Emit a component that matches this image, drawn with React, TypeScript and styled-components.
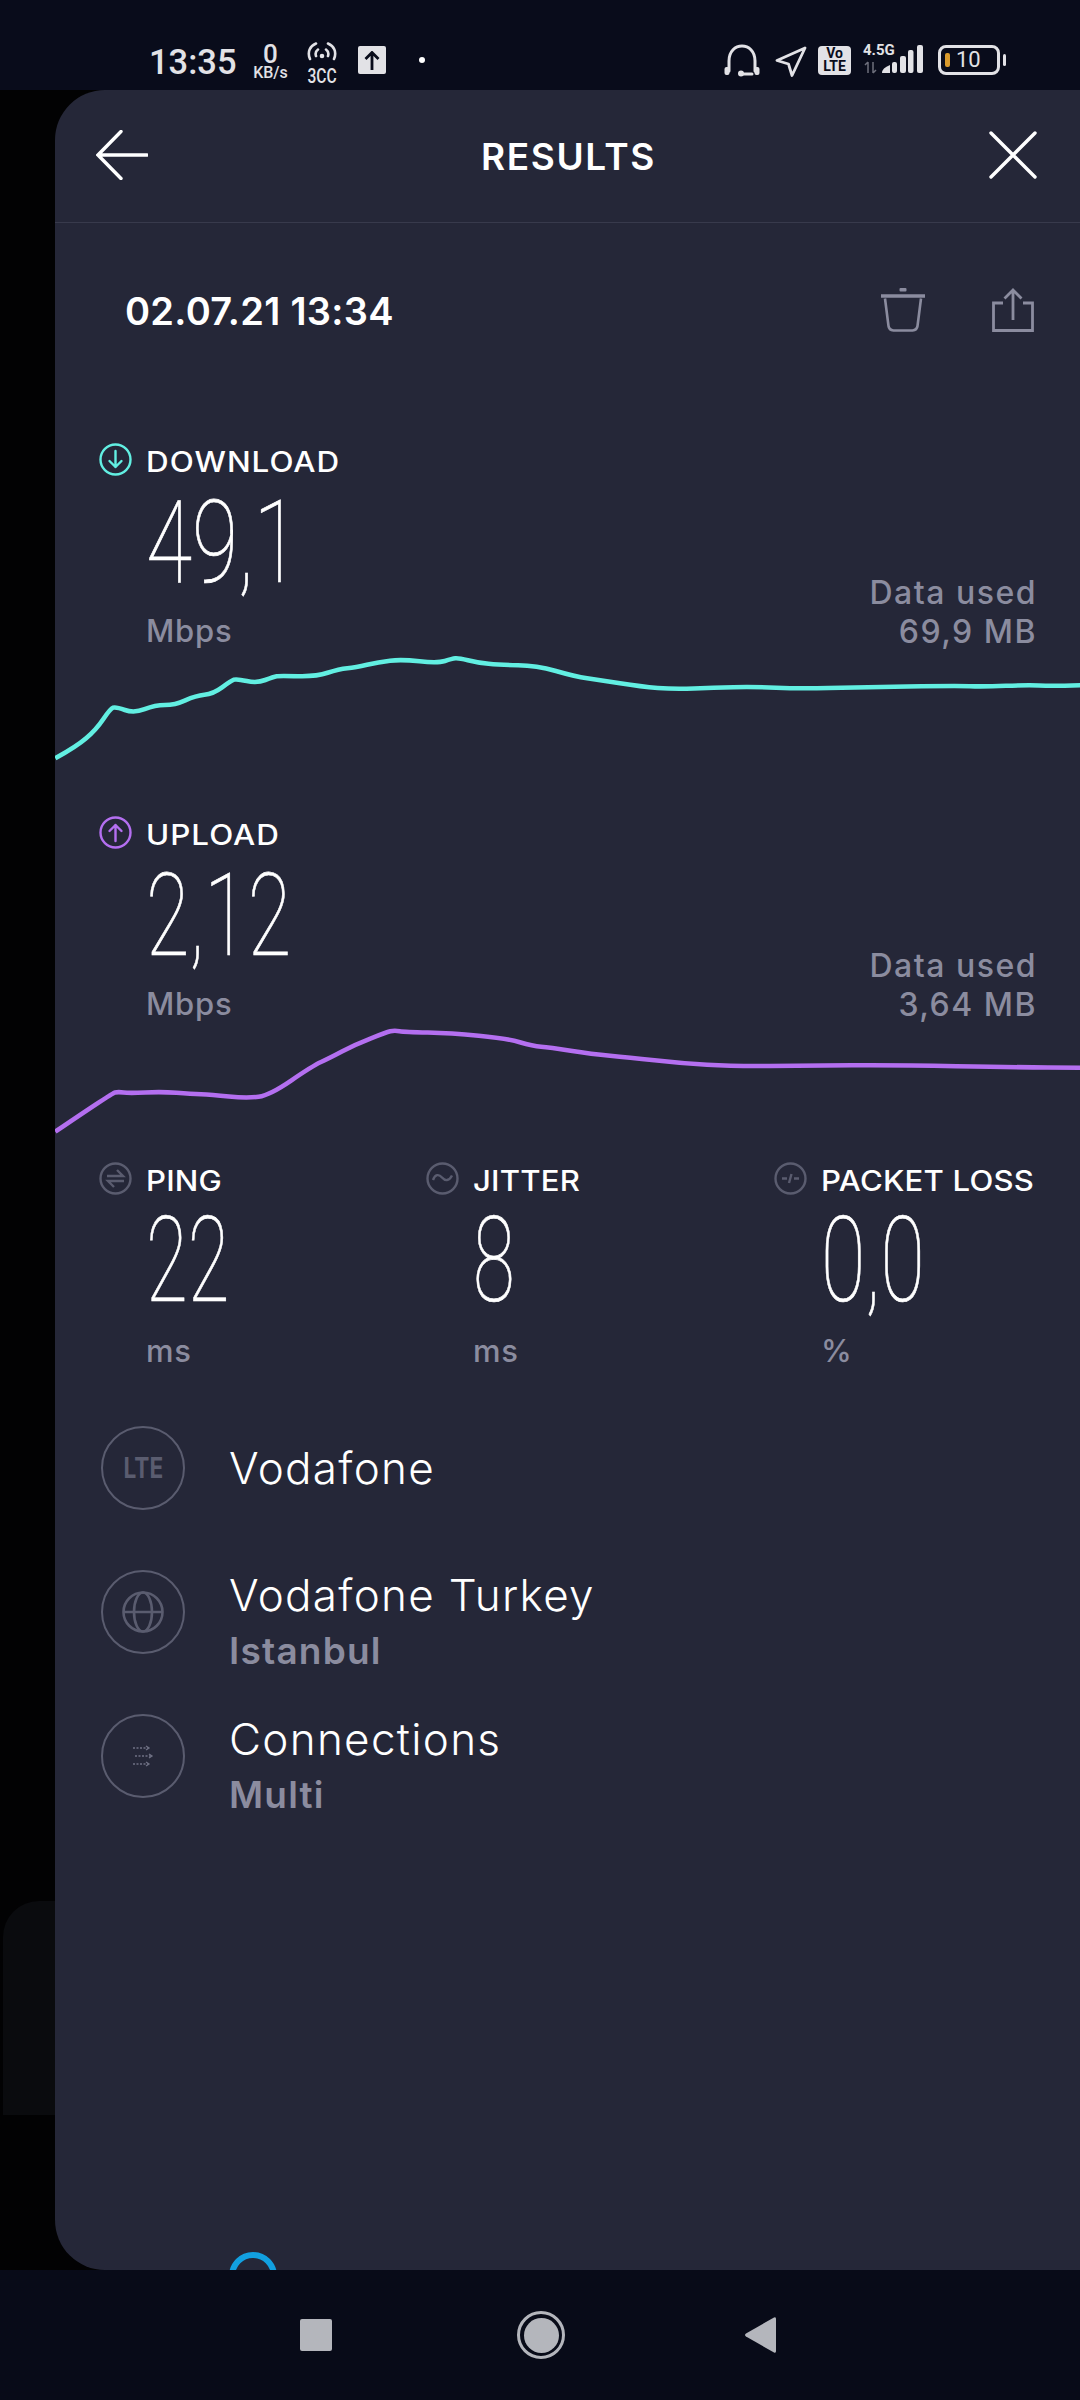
import React from 'react'
import styled, { createGlobalStyle } from 'styled-components'

const colors = {
  bar: '#090c1b',
  nav: '#080b18',
  backdrop: '#020203',
  sheet: '#252738',
  line: '#383a4c',
  white: '#ffffff',
  muted: '#8b8c9f',
  dim: '#5a5c6f',
  teal: '#62efe2',
  purple: '#b46ff0',
  status: '#e2e2e6',
  navIcon: '#b4b6bc'
}

const GlobalStyle = createGlobalStyle`
  html, body {
    margin: 0;
    padding: 0;
    background: ${colors.backdrop};
  }
  * {
    box-sizing: border-box;
  }
`

const Screen = styled.div`
  width: 1080px;
  height: 2400px;
  display: flex;
  flex-direction: column;
  overflow: hidden;
  font-family: Inter, 'Liberation Sans', sans-serif;
  color: ${colors.white};
`

/* status bar */
const StatusBar = styled.div`
  height: 90px;
  flex-shrink: 0;
  background: ${colors.bar};
  color: ${colors.status};
  display: flex;
  justify-content: space-between;
  align-items: flex-start;
  padding: 42px 80px 0 149px;
`
const StatusGroup = styled.div`
  display: flex;
  align-items: flex-start;
`
const Clock = styled.div`
  font-family: Roboto, sans-serif;
  font-weight: 500;
  font-size: 34.5px;
  line-height: 36px;
  width: 104px;
  margin-top: 2px;
`
const Speed = styled.div`
  width: 35px;
  text-align: center;
  font-family: Roboto, sans-serif;
  font-weight: 500;
`
const SpeedValue = styled.div`
  font-size: 26px;
  line-height: 24px;
`
const SpeedUnit = styled.div`
  font-size: 16px;
  line-height: 13px;
  white-space: nowrap;
  display: flex;
  justify-content: center;
`
const Carrier = styled.div`
  width: 30px;
  margin-left: 19px;
  font-family: Roboto, sans-serif;
  font-weight: 500;
`
const CarrierText = styled.div`
  font-size: 20px;
  line-height: 14px;
  margin-top: 4px;
  display: flex;
  justify-content: center;
  transform: scaleX(0.78);
  white-space: nowrap;
`
const UploadBadge = styled.div`
  width: 28px;
  height: 28px;
  margin: 4px 0 0 21px;
  border-radius: 2px;
  background: ${colors.status};
  color: ${colors.bar};
  display: flex;
  align-items: center;
  justify-content: center;
`
const Dot = styled.div`
  width: 6px;
  height: 6px;
  margin: 15px 0 0 33px;
  border-radius: 50%;
  background: ${colors.white};
`
const VoLte = styled.div`
  width: 33px;
  height: 29px;
  margin: 4px 0 0 11px;
  border-radius: 4px;
  background: ${colors.status};
  color: ${colors.bar};
  font-family: Roboto, sans-serif;
  font-weight: 700;
  font-size: 14px;
  line-height: 13px;
  text-align: center;
  padding-top: 1px;
`
const Signal = styled.div`
  width: 60px;
  height: 30px;
  margin: 2px 0 0 12px;
  position: relative;
`
const SignalLabel = styled.div`
  font-family: Roboto, sans-serif;
  font-weight: 700;
  font-size: 15px;
  line-height: 13px;
  white-space: nowrap;
`
const SignalBars = styled.svg`
  position: absolute;
  left: 0;
  top: 0;
`
const Battery = styled.div`
  width: 62px;
  height: 30px;
  margin: 3px 0 0 15px;
  border: 3px solid ${colors.status};
  border-radius: 8px;
  display: flex;
  align-items: center;
  padding-left: 4px;
  position: relative;
  &::after {
    content: '';
    position: absolute;
    right: -9px;
    top: 6px;
    width: 3px;
    height: 12px;
    border-radius: 2px;
    background: ${colors.status};
  }
`
const BatteryLevel = styled.div`
  width: 5px;
  height: 14px;
  border-radius: 2px;
  background: #d99a2b;
`
const BatteryText = styled.div`
  font-family: Roboto, sans-serif;
  font-size: 22px;
  line-height: 24px;
  margin-left: 6px;
`

/* sheet */
const Middle = styled.div`
  flex: 1;
  display: flex;
  position: relative;
  background: ${colors.backdrop};
`
const BackCard = styled.div`
  position: absolute;
  left: 3px;
  top: 1811px;
  width: 60px;
  height: 214px;
  border-radius: 36px 0 0 0;
  background: #0a0b0e;
`
const Sheet = styled.div`
  flex: 1;
  margin-left: 55px;
  background: ${colors.sheet};
  border-radius: 50px 0 0 50px;
  position: relative;
  overflow: hidden;
  z-index: 1;
`
const Header = styled.div`
  height: 133px;
  border-bottom: 1px solid ${colors.line};
  display: flex;
  align-items: center;
  justify-content: space-between;
  padding: 0 43px 2px 41px;
`
const Title = styled.div`
  font-weight: 600;
  font-size: 37px;
  line-height: 44px;
  letter-spacing: 1.6px;
  margin-top: 4px;
`
const DateRow = styled.div`
  height: 176px;
  display: flex;
  align-items: center;
  justify-content: space-between;
  padding: 0 46px 0 70px;
`
const DateText = styled.div`
  font-weight: 600;
  font-size: 38px;
  line-height: 44px;
  letter-spacing: 0.3px;
`
const DateActions = styled.div`
  display: flex;
  gap: 67px;
  margin-bottom: 2px;
  color: ${colors.muted};
`

const MetricList = styled.div`
  margin-top: 44px;
  display: flex;
  flex-direction: column;
  gap: 46px;
`
const Metric = styled.section``
const LabelRow = styled.div`
  display: flex;
  align-items: center;
  gap: 14px;
  height: 32px;
`
const MetricLabelRow = styled(LabelRow)`
  padding-left: 44px;
`
const Label = styled.div`
  font-weight: 500;
  font-size: 28px;
  line-height: 32px;
  letter-spacing: 0.9px;
  white-space: nowrap;
  margin-top: 5px;
  transform: scaleX(1.12);
  transform-origin: left center;
`
const StatLabel = styled(Label)`
  letter-spacing: 0.2px;
  transform: scaleX(1.11);
`
const MetricBody = styled.div`
  height: 175px;
  display: flex;
  justify-content: space-between;
  align-items: flex-start;
  padding: 0 43px 0 91px;
`
const Value = styled.div<{ $scale: number }>`
  font-family: Roboto, sans-serif;
  font-weight: 100;
  font-size: 115px;
  line-height: 118px;
  height: 118px;
  margin-top: 9px;
  white-space: nowrap;
  -webkit-text-stroke: 0.7px ${colors.white};
  transform: scaleX(${({ $scale }) => $scale});
  transform-origin: left center;
`
const Unit = styled.div`
  font-weight: 500;
  font-size: 31px;
  line-height: 34px;
  letter-spacing: 0.8px;
  color: ${colors.muted};
  margin-top: 12px;
`
const DataUsed = styled.div`
  margin-top: 98px;
  font-weight: 500;
  font-size: 32px;
  line-height: 39px;
  letter-spacing: 1.5px;
  color: ${colors.muted};
  text-align: right;
`
const ChartSvg = styled.svg`
  display: block;
  width: 1025px;
  height: 120px;
`
const ChartLine = styled.path<{ $color: string }>`
  fill: none;
  stroke: ${({ $color }) => $color};
  stroke-width: 4.6;
  stroke-linecap: butt;
  stroke-linejoin: round;
`

const Stats = styled.div`
  margin-top: 19px;
  padding-left: 44px;
  display: grid;
  grid-template-columns: 327px 348px auto;
`
const Stat = styled.div``
const StatBody = styled.div`
  padding-left: 47px;
  margin-top: 6px;
`
const StatValue = styled(Value)`
  font-size: 119px;
  height: 122px;
  line-height: 122px;
  margin-top: 0;
`
const StatUnit = styled(Unit)`
  margin-top: 12px;
`

const InfoList = styled.div`
  margin-top: 58px;
  padding-left: 46px;
  display: flex;
  flex-direction: column;
  gap: 60px;
`
const InfoRow = styled.div`
  display: flex;
  align-items: center;
  gap: 44px;
  height: 84px;
`
const InfoIcon = styled.div`
  width: 84px;
  height: 84px;
  border: 2.5px solid ${colors.dim};
  border-radius: 50%;
  color: ${colors.dim};
  display: flex;
  align-items: center;
  justify-content: center;
  flex-shrink: 0;
`
const LteText = styled.div`
  font-weight: 700;
  font-size: 29px;
  line-height: 30px;
  transform: scaleX(0.78);
`
const InfoStack = styled.div`
  padding-top: 16px;
`
const InfoTitle = styled.div`
  font-weight: 300;
  font-size: 44px;
  line-height: 52px;
  letter-spacing: 1.3px;
  white-space: nowrap;
`
const InfoSub = styled.div`
  font-weight: 600;
  font-size: 37px;
  line-height: 42px;
  letter-spacing: 1.2px;
  margin-top: 9px;
  color: ${colors.muted};
`
const Spinner = styled.div`
  position: absolute;
  left: 174px;
  top: 2162px;
  width: 48px;
  height: 48px;
  border: 6px solid #12a0e0;
  border-radius: 50%;
`

/* nav bar */
const NavBar = styled.div`
  height: 130px;
  flex-shrink: 0;
  background: ${colors.nav};
  display: flex;
  align-items: center;
  padding: 0 0 0 300px;
  color: ${colors.navIcon};
`
const NavSquare = styled.div`
  width: 32px;
  height: 32px;
  border-radius: 2px;
  background: ${colors.navIcon};
`
const NavHome = styled.div`
  width: 48px;
  height: 48px;
  margin-left: 185px;
  border: 3px solid ${colors.navIcon};
  border-radius: 50%;
  padding: 3.5px;
  &::before {
    content: '';
    display: block;
    width: 100%;
    height: 100%;
    border-radius: 50%;
    background: ${colors.navIcon};
  }
`
const NavBack = styled.svg`
  margin-left: 180px;
  display: block;
`

const toPath = (points: number[][], offset: number) => {
  const pts = points.map(([x, y]) => [x / 1.522 - 5, y / 3 - offset])
  let d = `M${pts[0][0].toFixed(1)} ${pts[0][1].toFixed(1)}`
  for (let i = 1; i < pts.length - 1; i++) {
    const mx = (pts[i][0] + pts[i + 1][0]) / 2
    const my = (pts[i][1] + pts[i + 1][1]) / 2
    d += ` Q${pts[i][0].toFixed(1)} ${pts[i][1].toFixed(1)} ${mx.toFixed(1)} ${my.toFixed(1)}`
  }
  const last = pts[pts.length - 1]
  return `${d} L${last[0].toFixed(1)} ${last[1].toFixed(1)}`
}

const downloadPoints = [
  [8, 1015], [40, 980], [70, 930], [92, 866], [100, 860], [128, 880], [160, 855], [190, 855], [222, 827], [248, 822],
  [276, 782], [284, 776], [315, 790], [340, 770], [350, 767], [405, 770], [440, 747], [465, 742], [500, 726], [535, 718],
  [590, 730], [612, 716], [622, 714], [650, 728], [685, 735], [740, 736], [800, 770], [835, 780], [900, 800], [950, 808],
  [1010, 803], [1070, 800], [1140, 806], [1230, 802], [1380, 797], [1420, 800], [1490, 795], [1520, 798], [1568, 796]
]
const uploadPoints = [
  [8, 995], [94, 880], [104, 875], [120, 880], [170, 875], [215, 882], [245, 884], [300, 895], [335, 885], [400, 797],
  [425, 775], [465, 733], [512, 697], [524, 691], [540, 696], [610, 699], [695, 715], [735, 738], [760, 742], [825, 762], [880, 772],
  [960, 790], [1040, 799], [1150, 797], [1290, 795], [1470, 802], [1568, 803]
]

const BackIcon = () => (
  <svg width="52" height="50" viewBox="0 0 52 50" fill="none" stroke="currentColor" strokeWidth="3.4" strokeLinecap="round">
    <path d="M25 1.5 2 25l23 23.500M2 25h49" />
  </svg>
)
const CloseIcon = () => (
  <svg width="48" height="48" viewBox="0 0 48 48" fill="none" stroke="currentColor" strokeWidth="3.4" strokeLinecap="round">
    <path d="M2 2l44 44M46 2 2 46" />
  </svg>
)
const TrashIcon = () => (
  <svg width="44" height="44" viewBox="0 0 44 44" fill="none" stroke="currentColor">
    <rect x="18.500" width="7" height="3.500" rx="1" fill="currentColor" stroke="none" />
    <path d="M0 8h44" strokeWidth="3.500" />
    <path d="M4 10.500 7.500 38q.5 4 5 4.500h19q4.500-.5 5-4.500L40 10.500" strokeWidth="2.600" />
  </svg>
)
const ShareIcon = () => (
  <svg width="42" height="44" viewBox="0 0 42 44" fill="none" stroke="currentColor" strokeWidth="2.800">
    <path d="M21 32V2M12.500 10.500 21 2l8.500 8.500" />
    <path d="M11 15H1.500v27.500h39V15H31" />
  </svg>
)
const ArrowCircle = ({ up, color }: { up?: boolean; color: string }) => (
  <svg width="33" height="33" viewBox="0 0 33 33" fill="none" stroke={color} strokeWidth="2.400" strokeLinecap="round" strokeLinejoin="round">
    <circle cx="16.500" cy="16.500" r="15" />
    {up ? <path d="M16.500 25V9M10.500 15l6-6 6 6" /> : <path d="M16.500 8v16M10.500 18l6 6 6-6" />}
  </svg>
)
const PingIcon = () => (
  <svg width="33" height="33" viewBox="0 0 33 33" fill="none" stroke={colors.dim} strokeWidth="2.400">
    <circle cx="16.500" cy="16.500" r="15" />
    <path d="M8 14h16l-6-6M25 19H9l6 6" />
  </svg>
)
const JitterIcon = () => (
  <svg width="33" height="33" viewBox="0 0 33 33" fill="none" stroke={colors.dim} strokeWidth="2.400">
    <circle cx="16.500" cy="16.500" r="15" />
    <path d="M7 18c2-6 6-6 9-2.500s7 4 10-2" />
  </svg>
)
const LossIcon = () => (
  <svg width="33" height="33" viewBox="0 0 33 33" fill="none" stroke={colors.dim} strokeWidth="2.400">
    <circle cx="16.500" cy="16.500" r="15" />
    <path d="M8 16.500h5M20 16.500h5M17.500 12l-2.500 9" />
  </svg>
)
const GlobeIcon = () => (
  <svg width="42" height="42" viewBox="0 0 42 42" fill="none" stroke="currentColor" strokeWidth="2.600">
    <circle cx="21" cy="21" r="19.500" />
    <ellipse cx="21" cy="21" rx="9" ry="19.500" />
    <path d="M2 21h38" />
  </svg>
)
const ConnectionsIcon = () => (
  <svg width="22" height="22" viewBox="0 0 22 22" fill="none" stroke="#6f7184" strokeWidth="1.300">
    <path d="M1 3h15" strokeDasharray="2 1.500" />
    <path d="M14 1l3 2-3 2" />
    <path d="M3 11h16" strokeDasharray="2 1.500" />
    <path d="M17 9l3 2-3 2" />
    <path d="M1 19h15" strokeDasharray="2 1.500" />
    <path d="M14 17l3 2-3 2" />
  </svg>
)
const WifiIcon = () => (
  <svg width="30" height="19" viewBox="0 0 30 19" fill="none" stroke={colors.status} strokeWidth="2.600" strokeLinecap="round">
    <circle cx="15" cy="14" r="2.300" fill={colors.status} stroke="none" />
    <path d="M9 14c-1-3 0-5 2-6.500M21 14c1-3 0-5-2-6.500M3 17C0 10 3 4 9 1.500M27 17c3-7 0-13-6-15.500" />
  </svg>
)
const UpArrow = () => (
  <svg width="16" height="19" viewBox="0 0 16 19" fill="none" stroke="currentColor" strokeWidth="2.800">
    <path d="M8 19V2M1.500 8 8 1.500 14.500 8" />
  </svg>
)
const HeadsetIcon = () => (
  <svg width="36" height="33" viewBox="0 0 36 33" fill="none" stroke={colors.status} strokeWidth="3" strokeLinecap="round" style={{ marginTop: 2 }}>
    <path d="M5 27V17C5 -3 31 -3 31 17v10" />
    <path d="M17 30h11" />
    <rect x="0.500" y="23" width="5" height="8" rx="2" fill={colors.status} stroke="none" />
    <rect x="30.500" y="23" width="5" height="8" rx="2" fill={colors.status} stroke="none" />
    <circle cx="17" cy="29.500" r="3" fill={colors.status} stroke="none" />
  </svg>
)
const LocationIcon = () => (
  <svg width="32" height="31" viewBox="0 0 32 31" fill="none" stroke={colors.status} strokeWidth="2.800" strokeLinejoin="round" style={{ margin: '4px 0 0 15px' }}>
    <path d="M30 2 2 14.500l11.500 3.500 3.500 11.500z" />
  </svg>
)
const BarsIcon = () => (
  <SignalBars width="60" height="30" viewBox="0 0 60 30">
    <path d="M5 18v11M2 21l3-3M10 29V18M10 29l3-3" fill="none" stroke="#6d6f7c" strokeWidth="1.500" />
    <path d="M19 29q0-5 8-8v8z" fill={colors.status} />
    <rect x="29" y="18" width="5" height="11" rx="2" fill={colors.status} />
    <rect x="37" y="12" width="6" height="17" rx="2" fill={colors.status} />
    <rect x="45" y="6" width="5.500" height="23" rx="2" fill={colors.status} />
    <rect x="54" y="1" width="6" height="28" rx="2" fill={colors.status} />
  </SignalBars>
)

const App: React.FC = () => {
  return (
    <Screen>
      <GlobalStyle />
      <StatusBar>
        <StatusGroup>
          <Clock>13:35</Clock>
          <Speed>
            <SpeedValue>0</SpeedValue>
            <SpeedUnit>KB/s</SpeedUnit>
          </Speed>
          <Carrier>
            <WifiIcon />
            <CarrierText>3CC</CarrierText>
          </Carrier>
          <UploadBadge>
            <UpArrow />
          </UploadBadge>
          <Dot />
        </StatusGroup>
        <StatusGroup>
          <HeadsetIcon />
          <LocationIcon />
          <VoLte>
            Vo
            <br />
            LTE
          </VoLte>
          <Signal>
            <SignalLabel>4.5G</SignalLabel>
            <BarsIcon />
          </Signal>
          <Battery>
            <BatteryLevel />
            <BatteryText>10</BatteryText>
          </Battery>
        </StatusGroup>
      </StatusBar>

      <Middle>
        <BackCard />
        <Sheet>
          <Header>
            <BackIcon />
            <Title>RESULTS</Title>
            <CloseIcon />
          </Header>
          <DateRow>
            <DateText>02.07.21 13:34</DateText>
            <DateActions>
              <TrashIcon />
              <ShareIcon />
            </DateActions>
          </DateRow>

          <MetricList>
            <Metric>
              <MetricLabelRow>
                <ArrowCircle color={colors.teal} />
                <Label>DOWNLOAD</Label>
              </MetricLabelRow>
              <MetricBody>
                <div>
                  <Value $scale={0.73}>49,1</Value>
                  <Unit>Mbps</Unit>
                </div>
                <DataUsed>
                  Data used
                  <br />
                  69,9 MB
                </DataUsed>
              </MetricBody>
              <ChartSvg viewBox="0 0 1025 120">
                <ChartLine $color={colors.teal} d={toPath(downloadPoints, 230)} />
              </ChartSvg>
            </Metric>
            <Metric>
              <MetricLabelRow>
                <ArrowCircle up color={colors.purple} />
                <Label>UPLOAD</Label>
              </MetricLabelRow>
              <MetricBody>
                <div>
                  <Value $scale={0.69}>2,12</Value>
                  <Unit>Mbps</Unit>
                </div>
                <DataUsed>
                  Data used
                  <br />
                  3,64 MB
                </DataUsed>
              </MetricBody>
              <ChartSvg viewBox="0 0 1025 120">
                <ChartLine $color={colors.purple} d={toPath(uploadPoints, 223)} />
              </ChartSvg>
            </Metric>
          </MetricList>

          <Stats>
            <Stat>
              <LabelRow>
                <PingIcon />
                <StatLabel>PING</StatLabel>
              </LabelRow>
              <StatBody>
                <StatValue $scale={0.64}>22</StatValue>
                <StatUnit>ms</StatUnit>
              </StatBody>
            </Stat>
            <Stat>
              <LabelRow>
                <JitterIcon />
                <StatLabel>JITTER</StatLabel>
              </LabelRow>
              <StatBody>
                <StatValue $scale={0.64}>8</StatValue>
                <StatUnit>ms</StatUnit>
              </StatBody>
            </Stat>
            <Stat>
              <LabelRow>
                <LossIcon />
                <StatLabel>PACKET LOSS</StatLabel>
              </LabelRow>
              <StatBody>
                <StatValue $scale={0.68}>0,0</StatValue>
                <StatUnit>%</StatUnit>
              </StatBody>
            </Stat>
          </Stats>

          <InfoList>
            <InfoRow>
              <InfoIcon>
                <LteText>LTE</LteText>
              </InfoIcon>
              <div>
                <InfoTitle>Vodafone</InfoTitle>
              </div>
            </InfoRow>
            <InfoRow>
              <InfoIcon>
                <GlobeIcon />
              </InfoIcon>
              <InfoStack>
                <InfoTitle>Vodafone Turkey</InfoTitle>
                <InfoSub>Istanbul</InfoSub>
              </InfoStack>
            </InfoRow>
            <InfoRow>
              <InfoIcon>
                <ConnectionsIcon />
              </InfoIcon>
              <InfoStack>
                <InfoTitle>Connections</InfoTitle>
                <InfoSub>Multi</InfoSub>
              </InfoStack>
            </InfoRow>
          </InfoList>
          <Spinner />
        </Sheet>
      </Middle>

      <NavBar>
        <NavSquare />
        <NavHome />
        <NavBack width="31" height="36" viewBox="0 0 31 36">
          <path d="M29 0.500q2-1 2 1.500v32q0 2.500-2 1.500L1 19.500q-2-1.500 0-3z" fill="currentColor" />
        </NavBack>
      </NavBar>
    </Screen>
  )
}

export default App
